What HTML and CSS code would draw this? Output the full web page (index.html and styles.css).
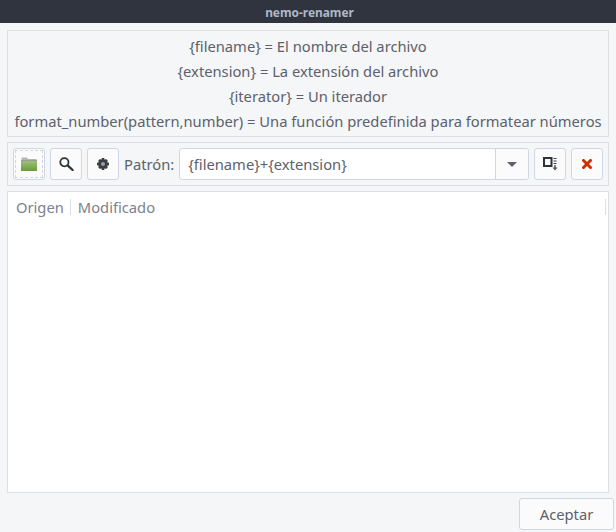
FILE: index.html
```html
<!DOCTYPE html>
<html lang="es">
<head>
<meta charset="utf-8">
<title>nemo-renamer</title>
<link rel="stylesheet" href="styles.css">
</head>
<body>
<header class="titlebar">nemo-renamer</header>
<main class="content">
  <section class="help">
    <p>{filename} = El nombre del archivo</p>
    <p>{extension} = La extensión del archivo</p>
    <p>{iterator} = Un iterador</p>
    <p>format_number(pattern,number) = Una función predefinida para formatear números</p>
  </section>
  <section class="toolbar">
    <button class="btn btn-focus" type="button" aria-label="Abrir">
      <span class="focus-ring">
        <svg width="16" height="14" viewBox="0 0 16 14"><defs><linearGradient id="fg" x1="0" y1="0" x2="0" y2="1"><stop offset="0" stop-color="#a3c27f"/><stop offset="1" stop-color="#6b9a3c"/></linearGradient></defs><path d="M0.5 3 V1 L1 0.5 H6 L7 2 H15.5 V4 H0.5Z" fill="#b4b6b1"/><rect x="0" y="3" width="16" height="11" fill="url(#fg)"/><rect x="0" y="3" width="16" height="1" fill="#9a9d96"/></svg>
      </span>
    </button>
    <button class="btn" type="button" aria-label="Buscar">
      <svg width="15" height="14" viewBox="0 0 15 14"><circle cx="5.4" cy="5.2" r="4.1" fill="none" stroke="#2e3436" stroke-width="1.8"/><path d="M8.6 8.4 L13.6 13" stroke="#2e3436" stroke-width="2.3" stroke-linecap="round"/></svg>
    </button>
    <button class="btn" type="button" aria-label="Opciones">
      <svg width="12" height="12" viewBox="0 0 12 12"><path d="M4.8 0 H7.2 L7.6 1.7 L9.1 1 L10.8 2.7 L10.1 4.2 L12 4.8 V7.2 L10.1 7.8 L10.8 9.3 L9.1 11 L7.6 10.3 L7.2 12 H4.8 L4.4 10.3 L2.9 11 L1.2 9.3 L1.9 7.8 L0 7.2 V4.8 L1.9 4.2 L1.2 2.7 L2.9 1 L4.4 1.7Z" fill="#3a3d42"/><circle cx="6" cy="6" r="2" fill="#9a9c9f"/></svg>
    </button>
    <label class="pattern-label">Patrón:</label>
    <div class="combo">
      <span class="combo-text">{filename}+{extension}</span>
      <span class="combo-arrow"><span class="arrow"></span></span>
    </div>
    <button class="btn" type="button" aria-label="Renombrar">
      <svg width="15" height="14" viewBox="0 0 15 14"><rect x="1" y="1" width="7.5" height="8" fill="none" stroke="#2e3436" stroke-width="2"/><path d="M10.5 1.5h3M10.5 4h3M10.5 6.5h3" stroke="#3c3f44" stroke-width="1"/><path d="M12 8 V11" stroke="#555" stroke-width="1.5"/><path d="M9.5 10.5 H14.5 L12 13.5Z" fill="#555"/></svg>
    </button>
    <button class="btn" type="button" aria-label="Cerrar">
      <svg width="10" height="10" viewBox="0 0 10 10"><path d="M1.5 1.5 L8.5 8.5 M8.5 1.5 L1.5 8.5" stroke="#cf2f00" stroke-width="3" stroke-linecap="square"/></svg>
    </button>
  </section>
  <section class="tree">
    <div class="tree-head">
      <span class="col col-first">Origen</span>
      <span class="col">Modificado</span>
      <span class="col-end"></span>
    </div>
  </section>
  <footer class="actions">
    <button class="btn-accept" type="button">Aceptar</button>
  </footer>
</main>
</body>
</html>
```
FILE: styles.css
```css
* { box-sizing: border-box; }
html, body { margin: 0; height: 100%; }
body {
  width: 616px;
  height: 532px;
  overflow: hidden;
  background: #f5f6f7;
  color: #5c616c;
  font-family: "Noto Sans", sans-serif;
  font-size: 14.72px;
  display: flex;
  flex-direction: column;
}
.titlebar {
  height: 23px;
  flex: none;
  padding-left: 3px;
  background: #2f343f;
  color: #afb8c6;
  font-size: 11.9px;
  font-weight: 700;
  line-height: 25px;
  text-align: center;
}
.content {
  flex: 1;
  display: flex;
  flex-direction: column;
  padding: 7px 7px 2px;
}
.help {
  height: 107px;
  flex: none;
  border: 1px solid #dcdfe3;
  display: flex;
  flex-direction: column;
  align-items: center;
  padding-top: 3px;
}
.help p {
  margin: 0;
  height: 25px;
  line-height: 25px;
  white-space: nowrap;
}
.toolbar {
  height: 44px;
  flex: none;
  margin-top: 5px;
  border: 1px solid #dcdfe3;
  display: flex;
  align-items: center;
  gap: 5px;
  padding: 0 5px;
}
.btn {
  width: 32px;
  height: 32px;
  flex: none;
  padding: 0;
  background: #fbfbfc;
  border: 1px solid #cfd6e6;
  border-radius: 3px;
  display: flex;
  align-items: center;
  justify-content: center;
}
.focus-ring {
  width: 28px;
  height: 28px;
  border: 1px dashed #d6d7d9;
  display: flex;
  align-items: center;
  justify-content: center;
}
.pattern-label { padding-bottom: 1px; }
.combo {
  flex: 1;
  height: 32px;
  display: flex;
  background: #fff;
  border: 1px solid #cfd6e6;
  border-radius: 3px;
  min-width: 0;
}
.combo-text {
  flex: 1;
  padding-left: 8px;
  line-height: 30px;
  white-space: nowrap;
}
.combo-arrow {
  width: 33px;
  flex: none;
  background: #fbfbfc;
  border-left: 1px solid #cfd6e6;
  border-radius: 0 3px 3px 0;
  display: flex;
  align-items: center;
  justify-content: center;
}
.arrow {
  width: 0;
  height: 0;
  border-left: 5px solid transparent;
  border-right: 5px solid transparent;
  border-top: 5px solid #5c616c;
}
.tree {
  flex: 1;
  margin-top: 5px;
  background: #fff;
  border: 1px solid #dcdfe3;
}
.tree-head {
  display: flex;
  align-items: center;
  height: 30px;
  color: #7c818c;
}
.col { line-height: 16px; padding: 0 6px 0 7px; }
.col-first { padding-left: 8px; border-right: 1px solid #dcdfe3; }
.col-end {
  margin-left: auto;
  margin-right: 2px;
  width: 1px;
  height: 16px;
  background: #dcdfe3;
}
.actions {
  display: flex;
  justify-content: flex-end;
  flex: none;
  margin-top: 5px;
}
.btn-accept {
  width: 95px;
  height: 32px;
  margin-right: -5px;
  padding: 0;
  background: #fbfbfc;
  border: 1px solid #cfd6e6;
  border-radius: 3px;
  color: #5c616c;
  font-family: inherit;
  font-size: inherit;
}
```
